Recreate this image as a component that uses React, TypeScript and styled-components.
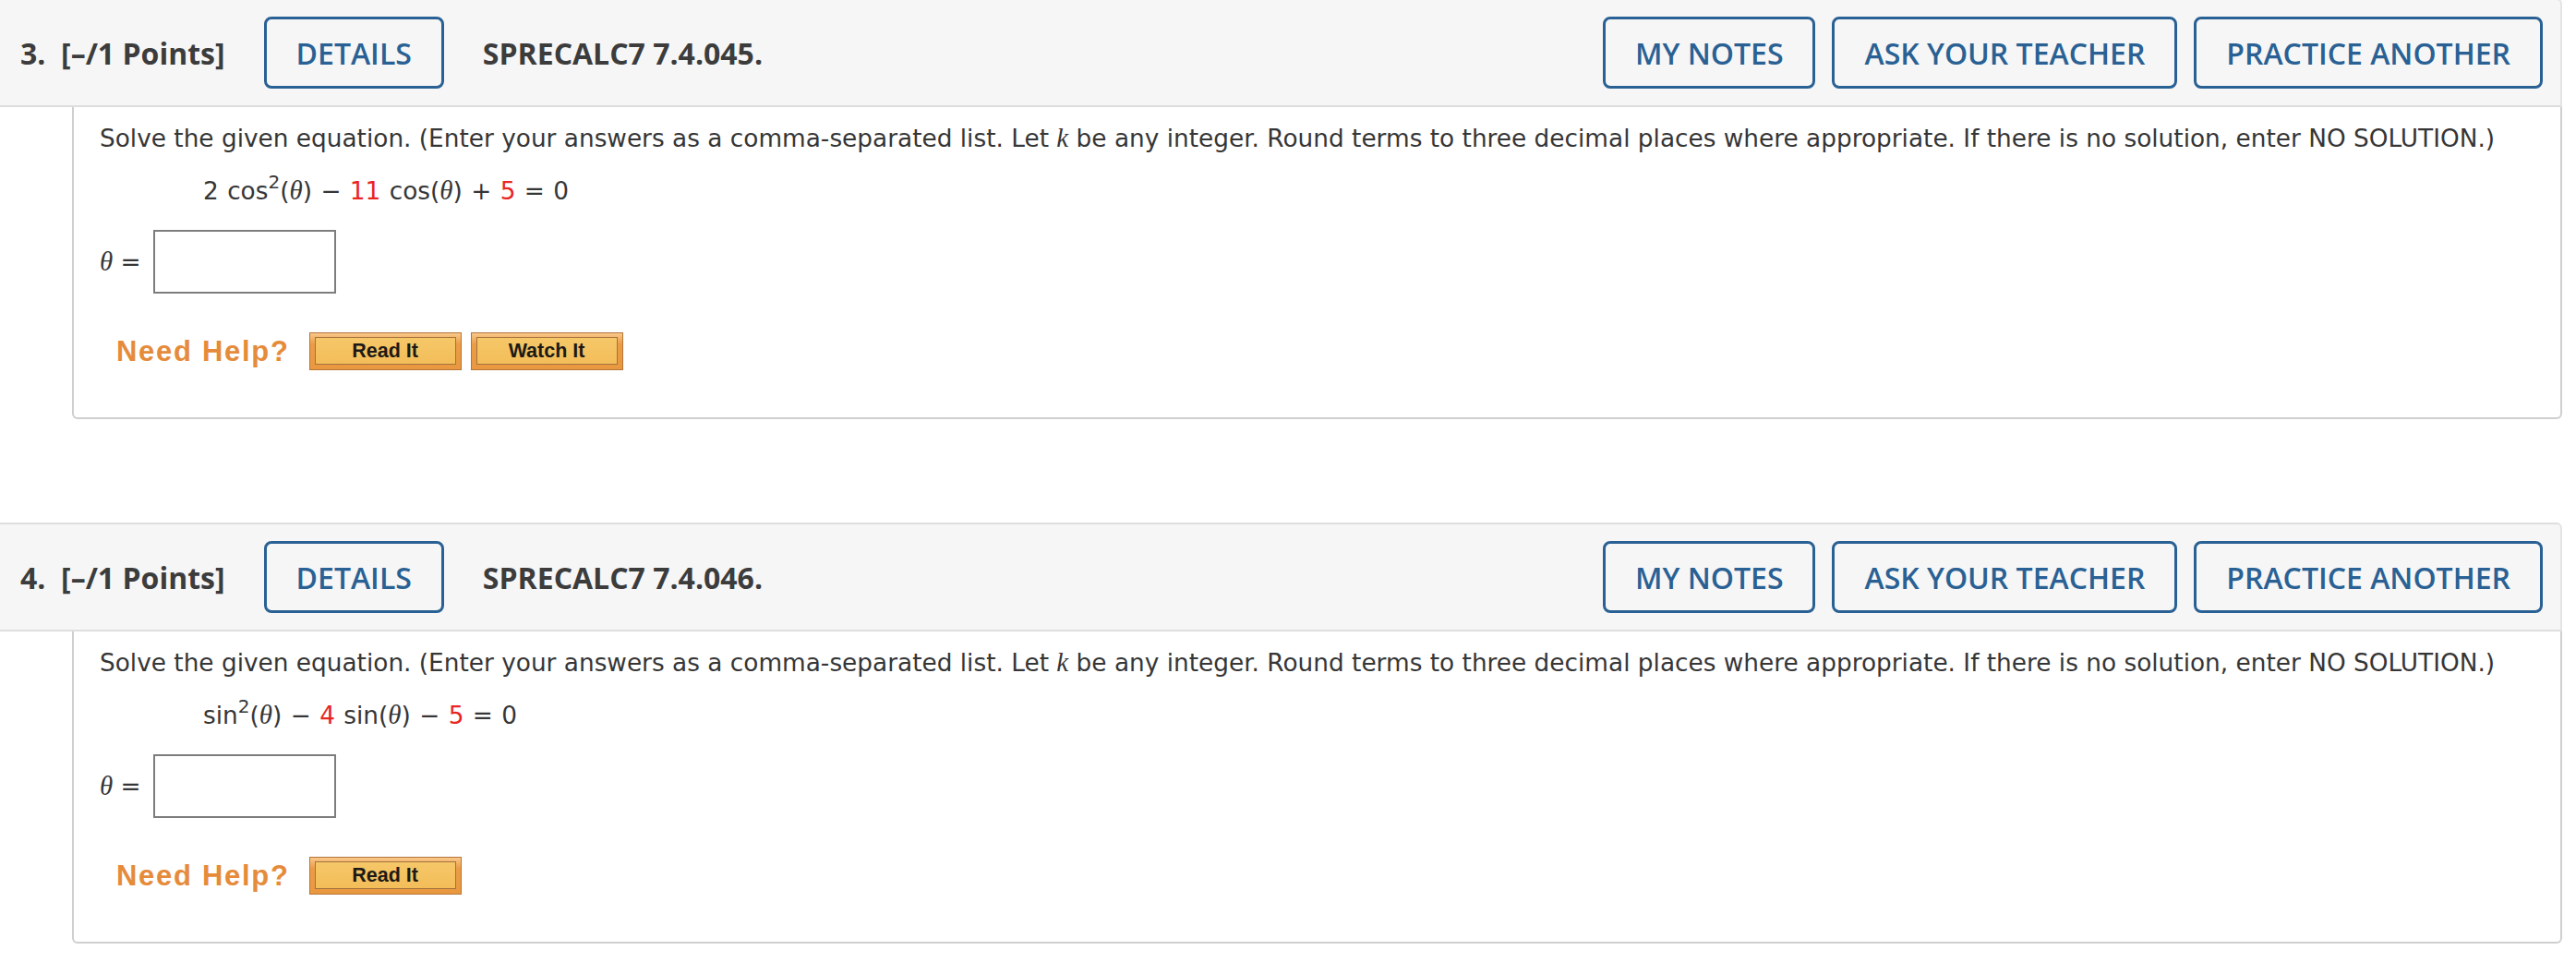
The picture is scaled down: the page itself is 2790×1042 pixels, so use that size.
import styled, { createGlobalStyle } from "styled-components";

const GlobalStyle = createGlobalStyle`
  html, body {
    margin: 0;
    padding: 0;
    background: #fff;
  }
  body {
    font-family: "DejaVu Sans", Verdana, sans-serif;
    color: #333;
  }
`;

const Page = styled.div`
  width: 2775px;
  display: flex;
  flex-direction: column;
  gap: 112px;
  padding-bottom: 20px;
`;

const Question = styled.section`
  display: flex;
  flex-direction: column;
  &:first-child {
    margin-top: -2px;
  }
`;

const Header = styled.div`
  display: flex;
  align-items: center;
  height: 114px;
  background: #f6f6f6;
  border-top: 2px solid #dedede;
  border-bottom: 2px solid #dedede;
  border-right: 2px solid #e4e4e4;
  border-top-right-radius: 6px;
  padding: 0 19px 0 22px;
  font-family: "Open Sans", "Noto Sans", sans-serif;
`;

const Label = styled.span`
  font-size: 32px;
  font-weight: 700;
  color: #3c3c3c;
  white-space: pre;
  margin-right: 42px;
`;

const OutlineButton = styled.button`
  height: 78px;
  padding: 0 32px;
  border: 3px solid #2a6194;
  border-radius: 8px;
  background: transparent;
  color: #2a6194;
  font-family: "Open Sans", "Noto Sans", sans-serif;
  font-size: 32px;
  font-weight: 600;
  white-space: nowrap;
`;

const Ref = styled.span`
  font-size: 32px;
  font-weight: 700;
  color: #3c3c3c;
  margin-left: 42px;
`;

const Actions = styled.div`
  margin-left: auto;
  display: flex;
  gap: 18px;
`;

const Body = styled.div`
  margin-left: 78px;
  border: 2px solid #cfcfcf;
  border-top: none;
  border-radius: 0 0 6px 6px;
  padding: 13px 28px 51px;
  display: flex;
  flex-direction: column;
  align-items: flex-start;
  font-size: 26.35px;
  color: #363636;
`;

const Prompt = styled.p`
  margin: 0;
  line-height: 40px;
  white-space: nowrap;
`;

const MathVar = styled.i`
  font-family: "Liberation Serif", "Times New Roman", serif;
  font-size: 1.1em;
`;

const Equation = styled.div`
  margin: 16px 0 0 112px;
  line-height: 40px;
  white-space: pre;
  word-spacing: 1px;
`;

const Red = styled.span`
  color: #e8251f;
`;

const Sup = styled.sup`
  font-size: 0.76em;
  vertical-align: 0.62em;
  line-height: 0;
`;

const AnswerRow = styled.div`
  margin-top: 22px;
  display: flex;
  align-items: center;
  gap: 13px;
`;

const AnswerInput = styled.div`
  width: 194px;
  height: 65px;
  border: 2px solid #7d7d7d;
  background: #fff;
`;

const HelpRow = styled.div`
  margin: 42px 0 0 18px;
  display: flex;
  align-items: center;
  gap: 10px;
`;

const NeedHelp = styled.span`
  font-family: "Liberation Sans", Arial, sans-serif;
  font-size: 31px;
  font-weight: 700;
  letter-spacing: 1.7px;
  color: #e58b3a;
  margin-right: 11px;
`;

const HelpButton = styled.span`
  width: 165px;
  height: 41px;
  box-sizing: border-box;
  border: 1px solid #b4753a;
  background: linear-gradient(#f9c88a, #eb9c45 30%, #e9983f);
  padding: 4px 5px 5px;
  display: flex;
`;

const HelpFace = styled.span`
  flex: 1;
  display: flex;
  align-items: center;
  justify-content: center;
  border: 1px solid #a4723e;
  background: linear-gradient(#f6c768, #f3bd59);
  font-family: "Liberation Sans", Arial, sans-serif;
  font-size: 21.5px;
  font-weight: 700;
  color: #1c1a16;
`;

interface QuestionData {
  num: number;
  code: string;
  equation: React.ReactNode;
  watch: boolean;
}

const T = () => <MathVar>θ</MathVar>;

const questions: QuestionData[] = [
  {
    num: 3,
    code: "SPRECALC7 7.4.045.",
    equation: (
      <>
        2 cos<Sup>2</Sup>(<T />) − <Red>11</Red> cos(<T />) + <Red>5</Red> = 0
      </>
    ),
    watch: true,
  },
  {
    num: 4,
    code: "SPRECALC7 7.4.046.",
    equation: (
      <>
        sin<Sup>2</Sup>(<T />) − <Red>4</Red> sin(<T />) − <Red>5</Red> = 0
      </>
    ),
    watch: false,
  },
];

function QuestionBlock({ q }: { q: QuestionData }) {
  return (
    <Question>
      <Header>
        <Label>{q.num}.  [–/1 Points]</Label>
        <OutlineButton>DETAILS</OutlineButton>
        <Ref>{q.code}</Ref>
        <Actions>
          <OutlineButton>MY NOTES</OutlineButton>
          <OutlineButton>ASK YOUR TEACHER</OutlineButton>
          <OutlineButton>PRACTICE ANOTHER</OutlineButton>
        </Actions>
      </Header>
      <Body>
        <Prompt>
          Solve the given equation. (Enter your answers as a comma-separated
          list. Let <MathVar>k</MathVar> be any integer. Round terms to three
          decimal places where appropriate. If there is no solution, enter NO
          SOLUTION.)
        </Prompt>
        <Equation>{q.equation}</Equation>
        <AnswerRow>
          <span>
            <T /> =
          </span>
          <AnswerInput />
        </AnswerRow>
        <HelpRow>
          <NeedHelp>Need Help?</NeedHelp>
          <HelpButton>
            <HelpFace>Read It</HelpFace>
          </HelpButton>
          {q.watch && (
            <HelpButton>
              <HelpFace>Watch It</HelpFace>
            </HelpButton>
          )}
        </HelpRow>
      </Body>
    </Question>
  );
}

export default function App() {
  return (
    <>
      <GlobalStyle />
      <Page>
        {questions.map((q) => (
          <QuestionBlock key={q.num} q={q} />
        ))}
      </Page>
    </>
  );
}
